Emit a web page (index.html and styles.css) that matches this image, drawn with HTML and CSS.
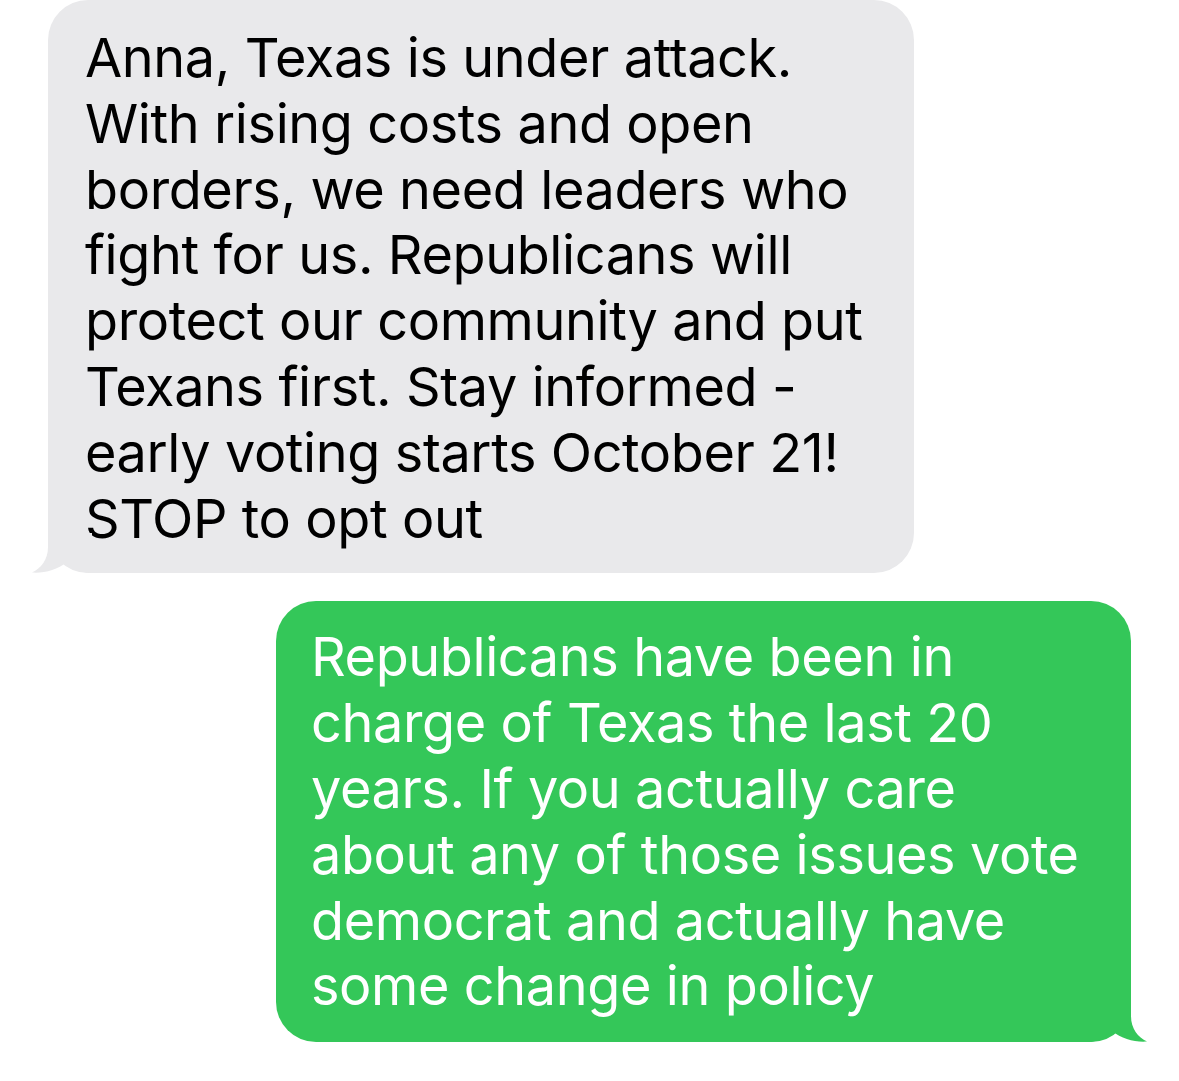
FILE: index.html
```html
<!DOCTYPE html>
<html lang="en">

<head>
    <meta charset="UTF-8">
    <meta name="viewport" content="width=device-width, initial-scale=1.0">
    <title>Messages</title>
    <link rel="stylesheet" href="styles.css">
</head>

<body>
    <div class="thread">
        <div class="bubble received">
            <p class="bubble-text">Anna, Texas is under attack.<br>With rising costs and open<br>borders, we need leaders who<br>fight for us. Republicans will<br>protect our community and put<br>Texans first. Stay informed -<br>early voting starts October 21!<br>STOP to opt out</p>
            <svg class="tail" width="60" height="40" viewBox="0 0 60 40">
                <path d="M16 0 L16 14 C16 27 9 35 0 39.6 C12 40.5 25 37 35 29 C42 35 50 40 60 40 L60 0 Z" />
            </svg>
        </div>

        <div class="bubble sent">
            <p class="bubble-text">Republicans have been in<br>charge of Texas the last 20<br>years. If you actually care<br>about any of those issues vote<br>democrat and actually have<br>some change in policy</p>
            <svg class="tail" width="60" height="40" viewBox="0 0 60 40">
                <path d="M16 0 L16 14 C16 27 9 35 0 39.6 C12 40.5 25 37 35 29 C42 35 50 40 60 40 L60 0 Z" />
            </svg>
        </div>
    </div>
</body>

</html>
```

FILE: styles.css
```css
body {
    margin: 0;
    background-color: #fff;
    font-family: Inter, "Noto Sans", sans-serif;
}

.thread {
    display: flex;
    flex-direction: column;
    gap: 28px;
    padding: 0 48px;
}

.bubble {
    position: relative;
    border-radius: 40px;
}

.bubble-text {
    margin: 0;
    font-size: 54px;
    line-height: 65.8px;
    white-space: nowrap;
    letter-spacing: -0.4px;
}

.received {
    align-self: flex-start;
    width: 866px;
    box-sizing: border-box;
    padding: 25px 20px 22px 37px;
    background-color: #e9e9eb;
    color: #000;
}

.sent {
    align-self: flex-end;
    width: 855px;
    box-sizing: border-box;
    padding: 23px 20px 23px 35px;
    background-color: #34c759;
    color: #fff;
}

.tail {
    position: absolute;
    bottom: 0;
}

.received .tail {
    left: -16px;
    fill: #e9e9eb;
}

.sent .tail {
    right: -16px;
    fill: #34c759;
    transform: scaleX(-1);
}
```
